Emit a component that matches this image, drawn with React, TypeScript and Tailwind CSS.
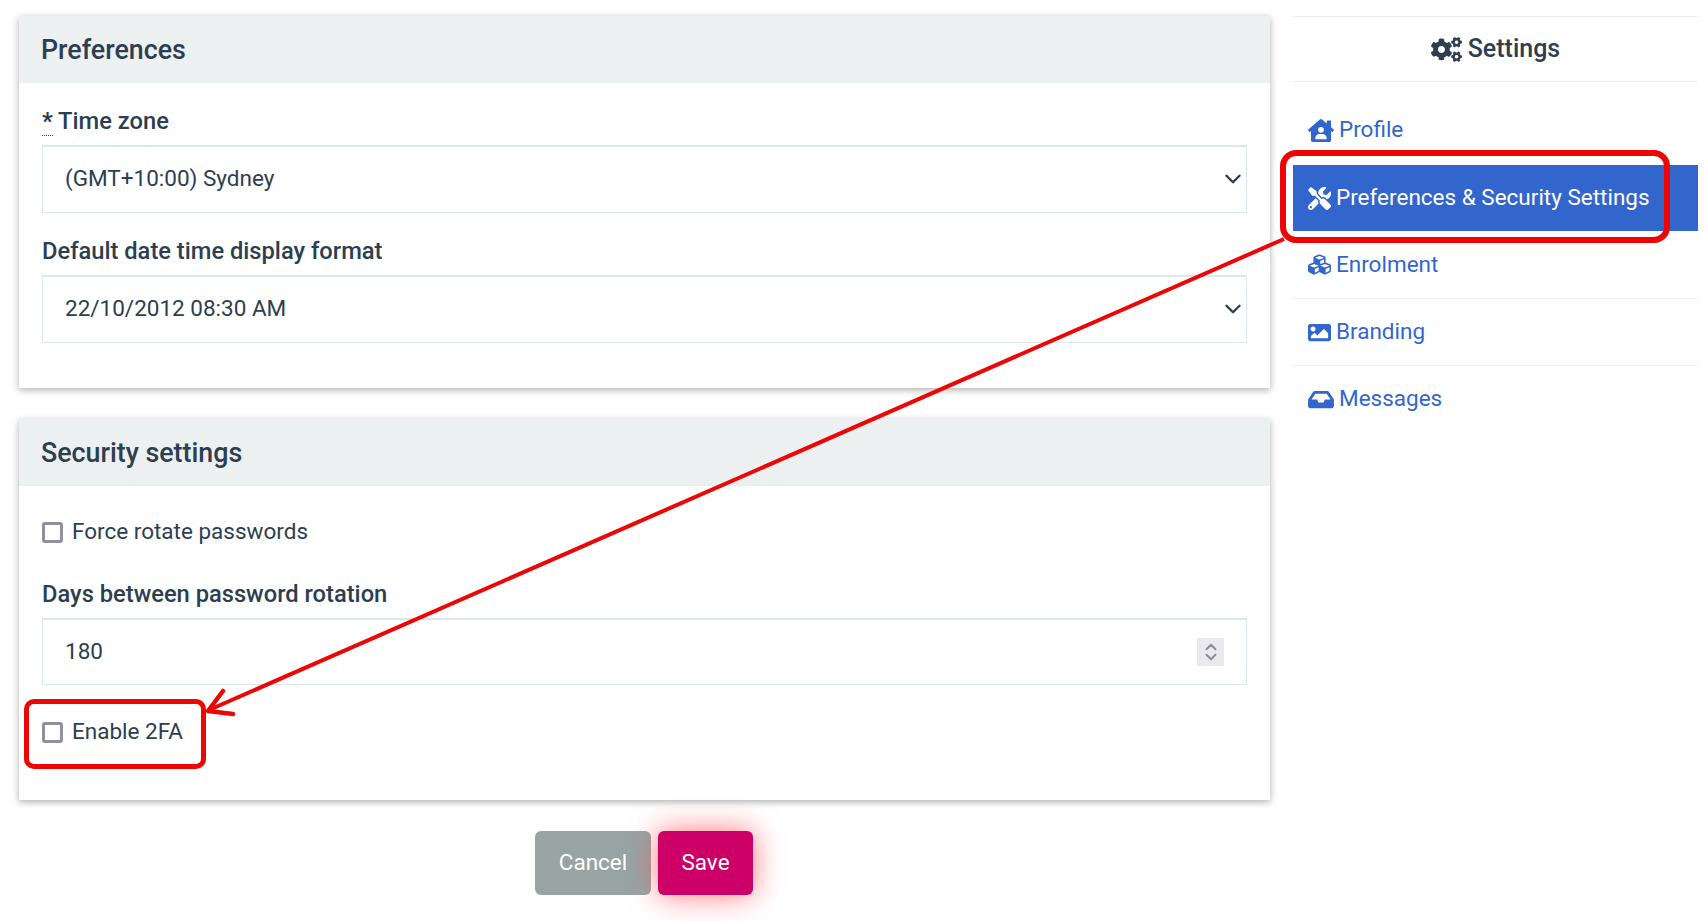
import { ChevronDown, ChevronUp } from 'lucide-react';
import { FaCogs, FaCubes, FaHouseUser, FaImage, FaInbox, FaTools } from 'react-icons/fa';
import type { ReactNode } from 'react';

function Card({ title, bodyClass, children }: { title: string; bodyClass: string; children: ReactNode }) {
  return (
    <section className="bg-white shadow-[0_2px_7px_rgba(0,0,0,0.32)]">
      <h2 className="h-[67px] bg-[#ecf0f1] px-[22px] pt-[2px] flex items-center text-[26.8px] font-medium">{title}</h2>
      <div className={`px-[23px] ${bodyClass}`}>{children}</div>
    </section>
  );
}

function Label({ children }: { children: ReactNode }) {
  return <label className="block h-[32px] mb-[8px] leading-[32px] text-[23.7px] font-medium">{children}</label>;
}

function Select({ value }: { value: string }) {
  return (
    <div className="h-[68px] border border-[#dee6ee] border-t-2 pl-[22px] pb-[2px] flex items-center justify-between text-[22.5px]">
      <span>{value}</span>
      <ChevronDown className="w-[26px] h-[26px]" strokeWidth={2.2} />
    </div>
  );
}

function Check({ label }: { label: string }) {
  return (
    <div className="h-[34px] pb-[2px] flex items-center gap-[9px] text-[22.5px]">
      <span className="w-[21px] h-[21px] border-[3px] border-[#8f8f9d] rounded-[3px] bg-white" />
      <span>{label}</span>
    </div>
  );
}

function NavItem({ icon, label, rowClass }: { icon: ReactNode; label: string; rowClass: string }) {
  return (
    <a className={`pl-[15px] flex items-center gap-[5px] text-[22.5px] ${rowClass}`}>
      {icon}
      <span>{label}</span>
    </a>
  );
}

export default function App() {
  return (
    <div className="relative w-[1707px] h-[921px] overflow-hidden bg-white font-['Roboto',sans-serif] text-[#2c3e50]">
      <div className="flex items-start pt-[16px] pl-[19px]">
        <main className="w-[1251px] shrink-0">
          <Card title="Preferences" bodyClass="pt-[22px] pb-[45px]">
            <Label>
              <abbr className="no-underline font-bold border-b border-dotted border-[#2c3e50]">*</abbr> Time zone
            </Label>
            <div className="mb-[22px]">
              <Select value="(GMT+10:00) Sydney" />
            </div>
            <Label>Default date time display format</Label>
            <Select value="22/10/2012 08:30 AM" />
          </Card>

          <div className="mt-[31px]">
            <Card title="Security settings" bodyClass="pt-[30px] pb-[50px]">
              <Check label="Force rotate passwords" />
              <div className="mt-[28px]">
                <Label>Days between password rotation</Label>
              </div>
              <div className="h-[67px] border border-[#dee6ee] border-t-2 px-[22px] flex items-center justify-between text-[22.5px]">
                <span>180</span>
                <span className="w-[27px] h-[28px] bg-[#e9e9ed] text-[#8b8b9a] flex flex-col items-center justify-center">
                  <ChevronUp className="w-[20px] h-[20px] -mb-[4px]" strokeWidth={2.6} />
                  <ChevronDown className="w-[20px] h-[20px] -mt-[4px]" strokeWidth={2.6} />
                </span>
              </div>
              <div className="mt-[31px]">
                <Check label="Enable 2FA" />
              </div>
            </Card>
          </div>

          <div className="mt-[31px] pr-[1px] flex justify-center gap-[7px] text-[22.5px] text-white">
            <button className="w-[116px] h-[64px] rounded-[6px] bg-[#97a4a3]">Cancel</button>
            <button className="w-[95px] h-[64px] rounded-[6px] bg-[#cc0066] shadow-[0_0_30px_rgba(255,70,80,0.75)]">Save</button>
          </div>
        </main>

        <aside className="w-[405px] ml-[23px] shrink-0">
          <div className="h-[66px] border-y border-[#ecf0f1] flex items-center justify-center gap-[6px] text-[25px] font-medium">
            <FaCogs className="w-[31px] h-[25px]" />
            <span>Settings</span>
          </div>
          <div className="pt-[16px] text-[#3366cc]">
            <NavItem icon={<FaHouseUser className="w-[26px] h-[23px]" />} label="Profile" rowClass="h-[67px] pb-[3px]" />
            <NavItem icon={<FaTools className="w-[23px] h-[23px]" />} label="Preferences & Security Settings" rowClass="h-[66px] bg-[#3366cc] text-white" />
            <NavItem icon={<FaCubes className="w-[23px] h-[23px]" />} label="Enrolment" rowClass="h-[68px] border-b border-[#ecf0f1]" />
            <NavItem icon={<FaImage className="w-[23px] h-[23px]" />} label="Branding" rowClass="h-[67px] border-b border-[#ecf0f1]" />
            <NavItem icon={<FaInbox className="w-[26px] h-[23px]" />} label="Messages" rowClass="h-[66px]" />
          </div>
        </aside>
      </div>

      {/* annotations drawn over the screenshot */}
      <div className="absolute left-[1280px] top-[150px] w-[390px] h-[93px] border-[6px] border-[#ec0606] rounded-[16px]" />
      <div className="absolute left-[24px] top-[699px] w-[182px] h-[70px] border-[5px] border-[#ec0606] rounded-[10px]" />
      <svg className="absolute left-0 top-0 pointer-events-none" width="1707" height="921" fill="none">
        <path d="M1284 239 L209 710" stroke="#ec0606" strokeWidth="4" />
        <path d="M223 691 L208 711 L233 714" stroke="#ec0606" strokeWidth="4.5" strokeLinecap="round" strokeLinejoin="round" />
      </svg>
    </div>
  );
}
